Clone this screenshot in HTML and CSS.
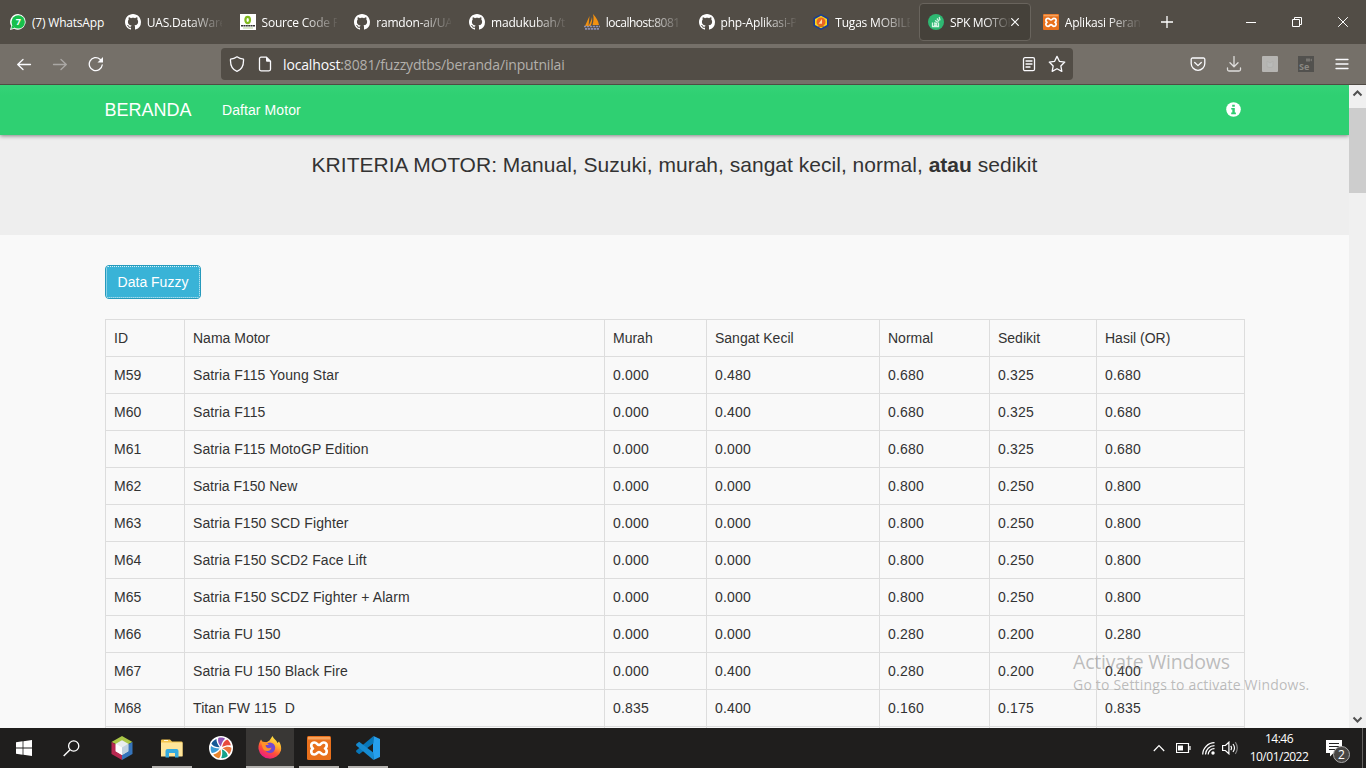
FILE: index.html
```html
<!DOCTYPE html>
<html lang="id">
<head>
<meta charset="utf-8">
<title>SPK MOTOR</title>
<link rel="stylesheet" href="styles.css">
</head>
<body>
<svg class="defs" width="0" height="0">
  <symbol id="github" viewBox="0 0 16 16"><path fill="#fff" d="M8 0C3.58 0 0 3.58 0 8c0 3.54 2.29 6.53 5.47 7.59.4.07.55-.17.55-.38 0-.19-.01-.82-.01-1.49-2.01.37-2.53-.49-2.69-.94-.09-.23-.48-.94-.82-1.13-.28-.15-.68-.52-.01-.53.63-.01 1.08.58 1.23.82.72 1.21 1.87.87 2.33.66.07-.52.28-.87.51-1.07-1.78-.2-3.64-.89-3.64-3.95 0-.87.31-1.59.82-2.15-.08-.2-.36-1.02.08-2.12 0 0 .67-.21 2.2.82.64-.18 1.32-.27 2-.27s1.36.09 2 .27c1.53-1.04 2.2-.82 2.2-.82.44 1.1.16 1.92.08 2.12.51.56.82 1.27.82 2.15 0 3.07-1.87 3.75-3.65 3.95.29.25.54.73.54 1.48 0 1.07-.01 1.93-.01 2.2 0 .21.15.46.55.38A8.01 8.01 0 0 0 16 8c0-4.42-3.58-8-8-8z"/></symbol>
  <symbol id="xampp" viewBox="0 0 24 24"><rect width="24" height="24" rx="1.5" fill="#e8701c"/><rect x="1" y="1" width="22" height="2.500" fill="#f6a25c"/><path d="M7.500 6.500c-4 0-4 4.500-1.500 6c-2.500 1.500-2.500 6 1.500 6c2.500 0 2.500-2.500 4.500-2.500s2 2.500 4.500 2.500c4 0 4-4.500 1.500-6c2.500-1.500 2.500-6-1.500-6c-2.500 0-2.500 2.500-4.500 2.500s-2-2.500-4.500-2.500z" fill="none" stroke="#fff" stroke-width="2.600" stroke-linejoin="round"/></symbol>
  <symbol id="blade" viewBox="-12 -12 24 24"><path d="M0-1.500C-1.800-4-3-7-1.800-10.300 1-10.800 3.500-10 5-8.800 3-7.500 1-5 0-1.500z"/></symbol>
</svg>

<header class="tabs">
  <div class="tab"><svg class="fav" viewBox="0 0 16 16"><path d="M8.200 0a7.800 7.800 0 1 1-4 14.700L0 16l1.200-4A8 8 0 0 1 8.200 0z" fill="#fff"/><circle cx="8.200" cy="7.900" r="6.700" fill="#17c04b"/><path d="M2 11l-.7 3.800 3.500-1z" fill="#17c04b"/><text x="5.700" y="11.300" class="fav-num">7</text></svg><span class="tab-text full">(7) WhatsApp</span></div>
  <div class="tab"><svg class="fav"><use href="#github"/></svg><span class="tab-text">UAS.DataWare</span></div>
  <div class="tab"><svg class="fav" viewBox="0 0 16 16"><path fill="#fff" d="M0 0h16v16H0z"/><ellipse cx="7.700" cy="6" rx="2.300" ry="3.200" fill="none" stroke="#80b91d" stroke-width="2.200"/><path d="M1 11.800h14" stroke="#333" stroke-width="1.500" stroke-dasharray="2 .4"/><path d="M3 14h10" stroke="#b5cf9a"/></svg><span class="tab-text">Source Code P</span></div>
  <div class="tab"><svg class="fav"><use href="#github"/></svg><span class="tab-text">ramdon-ai/UA</span></div>
  <div class="tab"><svg class="fav"><use href="#github"/></svg><span class="tab-text">madukubah/t</span></div>
  <div class="tab"><svg class="fav" viewBox="0 0 16 16"><path d="M5.500 2L1 12h3.500zM9 0c3 3 5.500 7 6 11H8.500c1-4 1.500-7 .5-11zM8 3c.5 3 0 6-1.500 9H4.500C6 9 7.500 6 8 3z" fill="#f29111"/><path d="M0 12.500h16M1 14.800h14" stroke="#8c8fb4" stroke-width="1.700" stroke-dasharray="2.300 .7"/></svg><span class="tab-text tight">localhost:8081</span></div>
  <div class="tab"><svg class="fav"><use href="#github"/></svg><span class="tab-text">php-Aplikasi-P</span></div>
  <div class="tab"><svg class="fav" viewBox="0 0 16 16"><path d="M8 0l7.600 3.900v8.200L8 16 .4 12.100V3.900z" fill="#173d96"/><path d="M8 1.700l6 3.200v6.200l-6 3.200-6-3.200V4.900z" fill="#f6d51f"/><circle cx="8" cy="7.900" r="4.500" fill="#ea6422"/><path d="M5.500 9.700L9 5v4.700z" fill="#ffd9a0"/><path d="M5 12.300h6" stroke="#b76a18"/></svg><span class="tab-text">Tugas MOBILE</span></div>
  <div class="tab active"><svg class="fav" viewBox="0 0 16 16"><circle cx="8" cy="8" r="8" fill="#2eb872"/><path d="M4.500 8.500v4h6v-4M6 11h3.200M6 9l3.200.5M7 6.500l3 1.800M9 4.500l2 2.800M11.200 3l.8 3.300" fill="none" stroke="#d5f5e4" stroke-width="1.300"/></svg><span class="tab-text">SPK MOTOR</span><svg class="tab-close" viewBox="0 0 8 8"><path d="M.3.300l7.400 7.400M7.700.300L.3 7.700" stroke="#fff" stroke-width="1.200"/></svg></div>
  <div class="tab"><svg class="fav"><use href="#xampp"/></svg><span class="tab-text">Aplikasi Peran</span></div>
  <svg class="newtab" viewBox="0 0 12 12"><path d="M6 0v12M0 6h12" stroke="#fff" stroke-width="1.300"/></svg>
  <div class="winbtns">
    <svg width="10" height="10"><path d="M0 5.500h10" stroke="#fff"/></svg>
    <svg width="10" height="10"><path d="M.5 2.500h7v7h-7zM2.500 2.500v-2h7v7h-2" fill="none" stroke="#fff"/></svg>
    <svg width="10" height="10"><path d="M.2.200l9.600 9.600M9.800.200L.2 9.800" stroke="#fff"/></svg>
  </div>
</header>

<div class="toolbar">
  <div class="nav-icons">
    <svg width="16" height="16" viewBox="0 0 16 16"><path d="M14.500 8.500H1.700M7 3.500L1.700 8.500l5.300 5" class="line"/></svg>
    <svg class="dim" width="16" height="16" viewBox="0 0 16 16"><path d="M1.500 8.500h12.800M9 3.500l5.300 5-5.300 5" class="line"/></svg>
    <svg width="16" height="16" viewBox="0 0 16 16"><path d="M14.200 9A6.500 6.500 0 1 1 12 3.200L14 5" class="line"/><path d="M15 1v5.500H9.500z" fill="#fbfbfe"/></svg>
  </div>
  <div class="urlbar">
    <svg width="16" height="16" viewBox="0 0 16 16"><path d="M8 .8C10 2.300 12 3 14.500 3.200 14.800 9 13 13.500 8 15.300 3 13.500 1.200 9 1.500 3.200 4 3 6 2.300 8 .8z" class="line"/></svg>
    <svg class="page-icon" width="16" height="16" viewBox="0 0 16 16"><path d="M9.500 1.200H4A1.500 1.500 0 0 0 2.500 2.700v10.600A1.500 1.500 0 0 0 4 14.800h8a1.500 1.500 0 0 0 1.500-1.500V5.200z" class="line"/><path d="M9 1l4.800 4.800H10a1 1 0 0 1-1-1z" fill="#fbfbfe"/></svg>
    <span class="url"><b>localhost</b>:8081/fuzzydtbs/beranda/inputnilai</span>
    <svg class="reader" width="16" height="16" viewBox="0 0 16 16"><rect x="2.500" y="1.700" width="11" height="13" rx="1.500" class="line"/><path d="M5 5h6M5 8h6M5 11h4" class="line"/></svg>
    <svg width="18" height="18" viewBox="0 0 16 16"><path d="M8 1.200l2.100 4.400 4.800.7-3.500 3.400.9 4.800L8 12.200l-4.300 2.300.9-4.800L1.100 6.300l4.800-.7z" class="line star"/></svg>
  </div>
  <div class="tools">
    <svg width="16" height="16" viewBox="0 0 16 16"><path d="M2.500 2h11a1.300 1.300 0 0 1 1.300 1.300V7.500a6.800 6.800 0 0 1-13.600 0V3.300A1.300 1.300 0 0 1 2.500 2z" class="line"/><path d="M4.700 6.500L8 9.600l3.300-3.100" class="line"/></svg>
    <svg width="16" height="16" viewBox="0 0 16 16"><path d="M8 .5v10M4 6.800l4 3.900 4-3.900M1.500 12v1.500a1.500 1.500 0 0 0 1.500 1.500h10a1.500 1.500 0 0 0 1.500-1.500V12" class="line soft"/></svg>
    <svg width="16" height="16" viewBox="0 0 16 16"><rect width="16" height="16" rx="1" fill="#b6b5b2"/><path d="M5 5v5c0 2 6 2 6 0V5l-3 2z" fill="#b9bab8" stroke="#b0b0ad"/></svg>
    <svg width="16" height="16" viewBox="0 0 16 16"><rect width="16" height="16" fill="#52514e"/><path d="M8 2.500h4v3H8zM12 4l2-1.500v3z" fill="#777570"/><text x="1" y="14" class="se">Se</text></svg>
    <svg width="16" height="16" viewBox="0 0 16 16"><path d="M2 3.500h12M2 8h12M2 12.500h12" class="line"/></svg>
  </div>
</div>

<div class="viewport">
  <div class="page">
    <nav class="navbar"><div class="container nav-inner">
      <a class="brand">BERANDA</a><a class="navlink">Daftar Motor</a>
      <svg class="info" width="15" height="15" viewBox="0 0 15 15"><circle cx="7.500" cy="7.500" r="7.300" fill="#fff"/><path d="M6.200 2.700h2.600v2.100H6.200zM5.200 6h3.600v4.500h1.100v1.700H5.200v-1.700h1.100V7.600H5.200z" fill="#2fcc71"/></svg>
    </div></nav>
    <section class="hero"><h1>KRITERIA MOTOR: Manual, Suzuki, murah, sangat kecil, normal, <b>atau</b> sedikit</h1></section>
    <main class="container">
      <button class="btn"><span>Data Fuzzy</span></button>
      <table class="data">
        <colgroup><col class="c1"><col class="c2"><col class="c3"><col class="c4"><col class="c5"><col class="c6"><col class="c7"></colgroup>
        <tr class="head"><td>ID</td><td>Nama Motor</td><td>Murah</td><td>Sangat Kecil</td><td>Normal</td><td>Sedikit</td><td>Hasil (OR)</td></tr>
        <tr><td>M59</td><td>Satria F115 Young Star</td><td>0.000</td><td>0.480</td><td>0.680</td><td>0.325</td><td>0.680</td></tr>
        <tr><td>M60</td><td>Satria F115</td><td>0.000</td><td>0.400</td><td>0.680</td><td>0.325</td><td>0.680</td></tr>
        <tr><td>M61</td><td>Satria F115 MotoGP Edition</td><td>0.000</td><td>0.000</td><td>0.680</td><td>0.325</td><td>0.680</td></tr>
        <tr><td>M62</td><td class="plain">Satria F150 New</td><td>0.000</td><td>0.000</td><td>0.800</td><td>0.250</td><td>0.800</td></tr>
        <tr><td>M63</td><td>Satria F150 SCD Fighter</td><td>0.000</td><td>0.000</td><td>0.800</td><td>0.250</td><td>0.800</td></tr>
        <tr><td>M64</td><td>Satria F150 SCD2 Face Lift</td><td>0.000</td><td>0.000</td><td>0.800</td><td>0.250</td><td>0.800</td></tr>
        <tr><td>M65</td><td>Satria F150 SCDZ Fighter + Alarm</td><td>0.000</td><td>0.000</td><td>0.800</td><td>0.250</td><td>0.800</td></tr>
        <tr><td>M66</td><td>Satria FU 150</td><td>0.000</td><td>0.000</td><td>0.280</td><td>0.200</td><td>0.280</td></tr>
        <tr><td>M67</td><td>Satria FU 150 Black Fire</td><td>0.000</td><td>0.400</td><td>0.280</td><td>0.200</td><td>0.400</td></tr>
        <tr><td>M68</td><td>Titan FW 115&nbsp; D</td><td>0.835</td><td>0.400</td><td>0.160</td><td>0.175</td><td>0.835</td></tr>
        <tr><td></td><td></td><td></td><td></td><td></td><td></td><td></td></tr>
      </table>
    </main>
  </div>
  <div class="scrollbar">
    <svg width="17" height="23"><path d="M4.500 10.500l4-4 4 4" class="arrow"/></svg>
    <div class="thumb"></div>
    <svg class="down" width="17" height="17"><path d="M4.500 6.500l4 4 4-4" class="arrow"/></svg>
  </div>
  <div class="watermark"><div class="wm1">Activate Windows</div><div class="wm2">Go to Settings to activate Windows.</div></div>
</div>

<footer class="taskbar">
  <div class="task"><svg width="16" height="16" viewBox="0 0 16 16"><path d="M0 2.300L6.600 1.300v6.300H0zM7.400 1.200L16 0v7.600H7.400zM0 8.400h6.600v6.300L0 13.800zM7.400 8.400H16V16l-8.600-1.200z" fill="#fff"/></svg></div>
  <div class="task search"><svg width="17" height="17" viewBox="0 0 17 17"><circle cx="10.700" cy="6" r="5.100" fill="none" stroke="#fff" stroke-width="1.300"/><path d="M7 9.700L.7 16" stroke="#fff" stroke-width="1.400"/></svg></div>
  <div class="task"><svg width="24" height="24" viewBox="0 0 24 24"><path d="M12 0l10.500 6L12 11 1.500 6z" fill="#aac747"/><path d="M1.500 6L12 12v12L1.500 18z" fill="#b72850"/><path d="M22.500 6L12 12v12l10.500-6z" fill="#3574bb"/><path d="M12 4.200l6.300 3.500v7.600L12 19l-6.300-3.700V7.700z" fill="#e9edee"/><path d="M12 11.500l6.300-3.800v7.600L12 19z" fill="#c2d2df"/><path d="M5.700 7.700L12 11.500V19l-6.300-3.700z" fill="#fff"/></svg></div>
  <div class="task open"><svg width="24" height="24" viewBox="0 0 24 24"><path d="M1 4.500a1 1 0 0 1 1-1h8l2 2h9.500a1 1 0 0 1 1 1V20H1z" fill="#f5c54e"/><path d="M1 6.500h21.500v14H1z" fill="#ffe59a"/><path d="M4 4.500h4" stroke="#fff8df"/><path d="M5.500 21.500V15a2 2 0 0 1 2-2h9a2 2 0 0 1 2 2v6.500H15V17H9v4.500z" fill="#35abe0"/></svg></div>
  <div class="task"><svg width="24" height="24" viewBox="-12 -12 24 24"><circle r="12" fill="#fff"/><g transform="rotate(-5)">
    <use href="#blade" x="-12" y="-12" width="24" height="24" fill="#8e55b6"/>
    <use href="#blade" x="-12" y="-12" width="24" height="24" fill="#e84a3e" transform="rotate(51.4)"/>
    <use href="#blade" x="-12" y="-12" width="24" height="24" fill="#e9753d" transform="rotate(102.9)"/>
    <use href="#blade" x="-12" y="-12" width="24" height="24" fill="#17a38a" transform="rotate(154.300)"/>
    <use href="#blade" x="-12" y="-12" width="24" height="24" fill="#e9852d" transform="rotate(205.700)"/>
    <use href="#blade" x="-12" y="-12" width="24" height="24" fill="#3d9dd6" transform="rotate(257.100)"/>
    <use href="#blade" x="-12" y="-12" width="24" height="24" fill="#165a96" transform="rotate(308.600)"/>
  </g></svg></div>
  <div class="task open current"><svg width="24" height="24" viewBox="0 0 24 24"><defs><linearGradient id="fx" x1=".8" y1="0" x2=".3" y2="1"><stop offset="0" stop-color="#fff14c"/><stop offset=".35" stop-color="#ffb02c"/><stop offset=".65" stop-color="#ff5038"/><stop offset="1" stop-color="#e9168c"/></linearGradient></defs><path d="M3 3.500l2 3 4-.5 2.500-1.500L14.500 0c1 3 4 4 5 7l1.500-1.500c2 3 2.500 6 2 9A11.600 11.600 0 0 1 .5 13C0 9 1.500 6 3 3.500z" fill="url(#fx)"/><circle cx="12" cy="11.800" r="5.200" fill="#7248cf"/><path d="M3 6c3-1 6 0 8 3H7.500c0 3 3 4 6 2.500-1 5-8 4.500-9 0z" fill="#ff9229"/></svg></div>
  <div class="task open"><svg width="24" height="24"><use href="#xampp"/></svg></div>
  <div class="task open"><svg width="24" height="24" viewBox="0 0 24 24"><path d="M17.500 0L24 3v18l-6.500 3L17 17V7z" fill="#269fed"/><path d="M17.500 0v7.300L3.200 18.300.2 16v-1.500z" fill="#0877b9"/><path d="M17.500 24v-7.300L3.200 5.700.2 8v1.500z" fill="#168bd1"/></svg></div>
  <div class="tray">
    <svg width="12" height="8"><path d="M.8 7L6 1.500 11.200 7" class="tl"/></svg>
    <svg class="battery" width="15" height="10"><path d="M.5.500h12v9H.5zM14 3v4" class="tl"/><path d="M2 2.500h5v5H2z" fill="#fff"/></svg>
    <svg class="wifi" width="13" height="13"><path d="M.7 12.500A12 12 0 0 1 12.500.700M3.500 12.500A9 9 0 0 1 12.500 3.700M6.200 12.500A6 6 0 0 1 12.500 6.600" class="tl"/><circle cx="11" cy="11" r="1.700" fill="#fff"/></svg>
    <svg class="sound" width="17" height="14"><path d="M.6 4.500h2.800l3.500-3.300v11.600L3.400 9.500H.6zM8.800 4.800q1.500 2.200 0 4.400M11 3q3 4 0 8" class="tl"/><path d="M13.300 1.200q4 5.800 0 11.600" class="tl faint"/></svg>
    <div class="clock"><div class="time">14:46</div><div class="date">10/01/2022</div></div>
    <div class="notify"><svg width="17" height="17"><path d="M0 0h16v13H7.500L4 16.500V13H0z" fill="#fff"/><path d="M3 3.500h10M3 6.500h10M3 9.500h6" stroke="#222"/></svg><span class="badge">2</span></div>
  </div>
  <div class="peek"></div>
</footer>
</body>
</html>
```

FILE: styles.css
```css
* { box-sizing: border-box; }
body { margin: 0; width: 1366px; height: 768px; overflow: hidden; display: flex; flex-direction: column; font-family: "Liberation Sans", Arial, sans-serif; font-size: 14px; color: #333; }
svg { display: block; flex: none; }
.defs { position: absolute; }

.tabs { height: 44px; flex: none; background: #524d46; display: flex; align-items: center; padding-left: 1.5px; font: 12px "Open Sans", "Noto Sans", sans-serif; color: #fff; }
.tab { width: 114.75px; flex: none; height: 38px; display: flex; align-items: center; padding-left: 8.500px; }
.fav { width: 16px; height: 16px; margin-right: 6px; }
.fav-num { font: bold 9px "Open Sans", sans-serif; fill: #fff; }
.tab-text { width: 75px; overflow: hidden; white-space: nowrap; letter-spacing: -.2px; -webkit-mask-image: linear-gradient(90deg, #000 55%, transparent 103%); mask-image: linear-gradient(90deg, #000 55%, transparent 103%); }
.tab-text.full { -webkit-mask-image: none; mask-image: none; letter-spacing: -.2px; }
.tab-text.tight { letter-spacing: -.5px; }
.tab.active { width: 112px; margin-left: -.5px; margin-right: 3.250px; background: #45413a; border: 1px solid #69645d; border-radius: 4px; padding-left: 8px; }
.active .tab-text { width: 60px; letter-spacing: -.35px; }
.tab-close { width: 8px; height: 8px; margin-left: 1px; }
.newtab { width: 12px; height: 12px; margin-left: 12px; }
.winbtns { margin-left: auto; display: flex; gap: 36px; padding-right: 18px; }

.toolbar { height: 41px; flex: none; background: #757069; border-bottom: 1px solid #504b44; display: flex; align-items: center; padding-left: 16px; }
.line { fill: none; stroke: #fbfbfe; stroke-width: 1.3; stroke-linecap: round; stroke-linejoin: round; }
.star { stroke-width: 1.150; }
.soft { stroke: #dedddb; }
.dim { opacity: .4; }
.nav-icons { display: flex; gap: 20px; width: 205px; }
.urlbar { width: 852px; height: 32px; background: #524d46; border-radius: 4px; display: flex; align-items: center; padding: 0 7px 0 8px; }
.page-icon { margin-left: 12px; }
.url { margin-left: 10px; padding-top: 1px; font: 14px "Open Sans", "Noto Sans", sans-serif; letter-spacing: -.15px; color: #b3b0ac; white-space: nowrap; }
.url b { font-weight: 400; color: #fbfbfe; }
.reader { margin-left: auto; margin-right: 11px; }
.tools { margin-left: 117px; display: flex; gap: 20px; }
.se { font: bold 9px "Open Sans", sans-serif; fill: #8a8883; }

.viewport { position: relative; flex: 1; min-height: 0; display: flex; overflow: hidden; }
.page { width: 1349px; background: #f9f9f9; overflow: hidden; }
.container { width: 1140px; margin-left: 105px; }
.navbar { position: relative; height: 50px; background: #2fd072; background-image: linear-gradient(#35d377, #2fd072 20%); box-shadow: 0 1px 4px rgba(0,0,0,.45); }
.nav-inner { height: 50px; display: flex; align-items: center; color: #fff; }
.brand { font-size: 18px; width: 117px; text-indent: -.5px; }
.navlink { font-size: 14px; letter-spacing: .08px; }
.info { margin-left: auto; margin-right: 4px; margin-top: -2px; }
.hero { height: 100px; background: #eee; text-align: center; padding-top: 17px; }
.hero h1 { margin: 0; font-size: 21px; font-weight: 400; line-height: 26px; letter-spacing: .02px; white-space: nowrap; }
.btn { display: block; margin: 30px 0 20px; width: 96px; height: 34px; padding: 0; background: #39b3d7; border: 1px solid #269abc; border-radius: 4px; color: #fff; font: 14px "Liberation Sans", Arial, sans-serif; }
.btn span { display: block; height: 32px; line-height: 30px; border: 1px dotted #d9f0f7; border-radius: 2px; }
.data { table-layout: fixed; width: 1139px; border-collapse: collapse; }
.data td { height: 37px; border: 1px solid #ddd; padding: 0 8px; line-height: 20px; letter-spacing: .2px; white-space: nowrap; }
.data td:first-child { letter-spacing: 0; }
.data td:nth-child(2) { letter-spacing: .1px; }
.data .head td, .data td.plain { letter-spacing: 0; }
.c1 { width: 79px; } .c2 { width: 420px; } .c3 { width: 102px; } .c4 { width: 173px; } .c5 { width: 110px; } .c6 { width: 107px; } .c7 { width: 148px; }

.scrollbar { width: 17px; background: #f0f0f0; display: flex; flex-direction: column; }
.thumb { height: 85px; background: #cdcdcd; }
.down { margin-top: auto; }
.arrow { fill: none; stroke: #505050; stroke-width: 2; }
.watermark { position: absolute; left: 1073px; top: 563px; color: rgba(130,130,130,.52); font-family: "Open Sans", "Noto Sans", sans-serif; white-space: nowrap; }
.wm1 { font-size: 19.500px; line-height: 27px; letter-spacing: -.2px; }
.wm2 { font-size: 14px; line-height: 19px; letter-spacing: .2px; }

.taskbar { height: 40px; flex: none; background: #1f1e1d; display: flex; }
.task { width: 48px; height: 40px; margin-right: 1.200px; display: flex; align-items: center; justify-content: center; }
.search { padding-right: 3px; }
.open { background: linear-gradient(#b5b3b0, #b5b3b0) 4px 38px / 40px 2px no-repeat; }
.current { background: linear-gradient(#b5b3b0, #b5b3b0) 0 38px / 48px 2px no-repeat #393735; }
.tray { margin-left: auto; display: flex; align-items: center; color: #fff; font: 12px "Open Sans", "Noto Sans", sans-serif; }
.tl { fill: none; stroke: #fff; stroke-width: 1.2; }
.faint { opacity: .45; }
.battery { margin-left: 11px; }
.wifi { margin-left: 11px; }
.sound { margin-left: 7px; }
.clock { width: 60px; margin-left: 10px; text-align: center; line-height: 18px; white-space: nowrap; }
.time, .date { letter-spacing: -.5px; }
.notify { position: relative; width: 36px; height: 17px; margin-left: 17px; }
.badge { position: absolute; left: 7px; top: 6px; width: 17px; height: 17px; border-radius: 50%; background: #484644; border: 1px solid #aaa; color: #fff; font-size: 12px; line-height: 15px; text-align: center; }
.peek { width: 4px; border-left: 1px solid #656361; }
```
